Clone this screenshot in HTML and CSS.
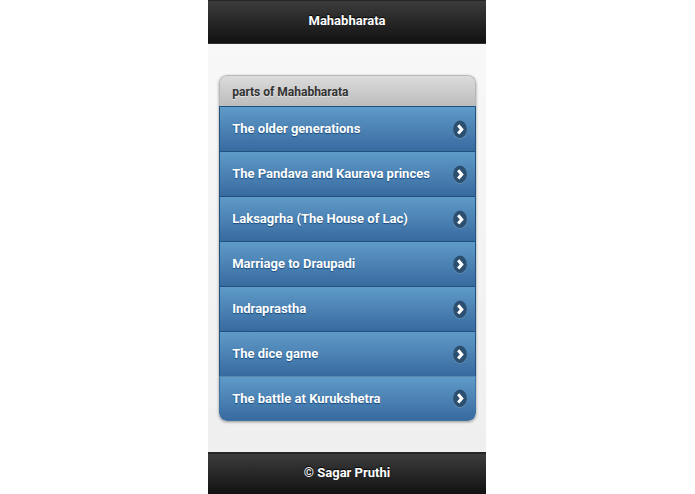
FILE: index.html
```html
<!DOCTYPE html>
<html lang="en">
<head>
<meta charset="utf-8">
<meta name="viewport" content="width=device-width, initial-scale=1">
<title>Mahabharata</title>
<link rel="stylesheet" href="styles.css">
</head>
<body>
<svg class="defs" aria-hidden="true">
  <symbol id="arrow" viewBox="0 0 14 19">
    <ellipse cx="7" cy="10.4" rx="6.8" ry="8.4" fill="#8fb2d0" opacity=".7"/>
    <ellipse cx="7" cy="9.4" rx="6.9" ry="8.8" fill="#2c4f70"/>
    <path d="M5.2 5.2 8.8 9.4 5.2 13.6" fill="none" stroke="#fff" stroke-width="3"/>
  </symbol>
</svg>
<div class="page">
  <header class="bar bar-top"><h1>Mahabharata</h1></header>
  <main class="content">
    <section class="list">
      <h2 class="divider">parts of Mahabharata</h2>
      <ul>
        <li><a href="#older">The older generations<svg class="arrow" aria-hidden="true"><use href="#arrow"/></svg></a></li>
        <li><a href="#princes">The Pandava and Kaurava princes<svg class="arrow" aria-hidden="true"><use href="#arrow"/></svg></a></li>
        <li><a href="#house">Laksagrha (The House of Lac)<svg class="arrow" aria-hidden="true"><use href="#arrow"/></svg></a></li>
        <li><a href="#marriage">Marriage to Draupadi<svg class="arrow" aria-hidden="true"><use href="#arrow"/></svg></a></li>
        <li><a href="#indraprastha">Indraprastha<svg class="arrow" aria-hidden="true"><use href="#arrow"/></svg></a></li>
        <li><a href="#dice">The dice game<svg class="arrow" aria-hidden="true"><use href="#arrow"/></svg></a></li>
        <li><a href="#battle">The battle at Kurukshetra<svg class="arrow" aria-hidden="true"><use href="#arrow"/></svg></a></li>
      </ul>
    </section>
  </main>
  <footer class="bar bar-bottom"><p>© Sagar Pruthi</p></footer>
</div>
</body>
</html>
```
FILE: styles.css
```css
* { box-sizing: border-box; }
body {
  margin: 0;
  padding-right: 1px;
  background: #fff;
  font-family: Roboto, "Liberation Sans", sans-serif;
  font-size: 13px;
  font-weight: bold;
  line-height: 20px;
}
h1, h2, p, ul { margin: 0; padding: 0; font: inherit; }
ul { list-style: none; }
.defs { display: none; }
.page {
  width: 40%;
  min-height: 100vh;
  margin: 0 auto;
  display: flex;
  flex-direction: column;
  background: linear-gradient(#f9f9f9, #eeeeee);
}
.bar {
  display: flex;
  align-items: center;
  justify-content: center;
  background: linear-gradient(#3c3c3c, #111);
  color: #fff;
  text-shadow: 0 -1px 1px #000;
}
.bar-top {
  padding: 10px 0 12px;
  border-top: 1px solid #252525;
  border-bottom: 1px solid #333;
}
.bar-bottom {
  padding: 9px 0 12px;
  border-top: 2px solid #252525;
}
.content { flex: 1; padding: 31px 10px 31px 11px; }
.list {
  overflow: hidden;
  border-radius: 8px;
  box-shadow: 0 1px 3px rgba(0, 0, 0, .4);
}
.divider {
  padding: 6px 12px 4px;
  border: 1px solid #b8b8b8;
  border-bottom: 0;
  border-radius: 8px 8px 0 0;
  background: linear-gradient(#dcdcdc, #bcbcbc);
  color: #333;
  font-size: 12px;
  text-shadow: 0 1px 0 #e4e4e4;
}
.list a {
  display: flex;
  align-items: center;
  justify-content: space-between;
  min-height: 45px;
  padding: 0 8px 0 12px;
  border: 1px solid #205280;
  border-bottom: 0;
  background: linear-gradient(#5f9bc8, #386aa0);
  color: #fff;
  text-decoration: none;
  text-shadow: 0 1px 1px #194b7e;
}
.list li:last-child a {
  border: 1px solid #3d73a5;
  border-top-color: #5687a9;
  border-radius: 0 0 8px 8px;
}
.arrow { flex: none; width: 14px; height: 19px; }
```
